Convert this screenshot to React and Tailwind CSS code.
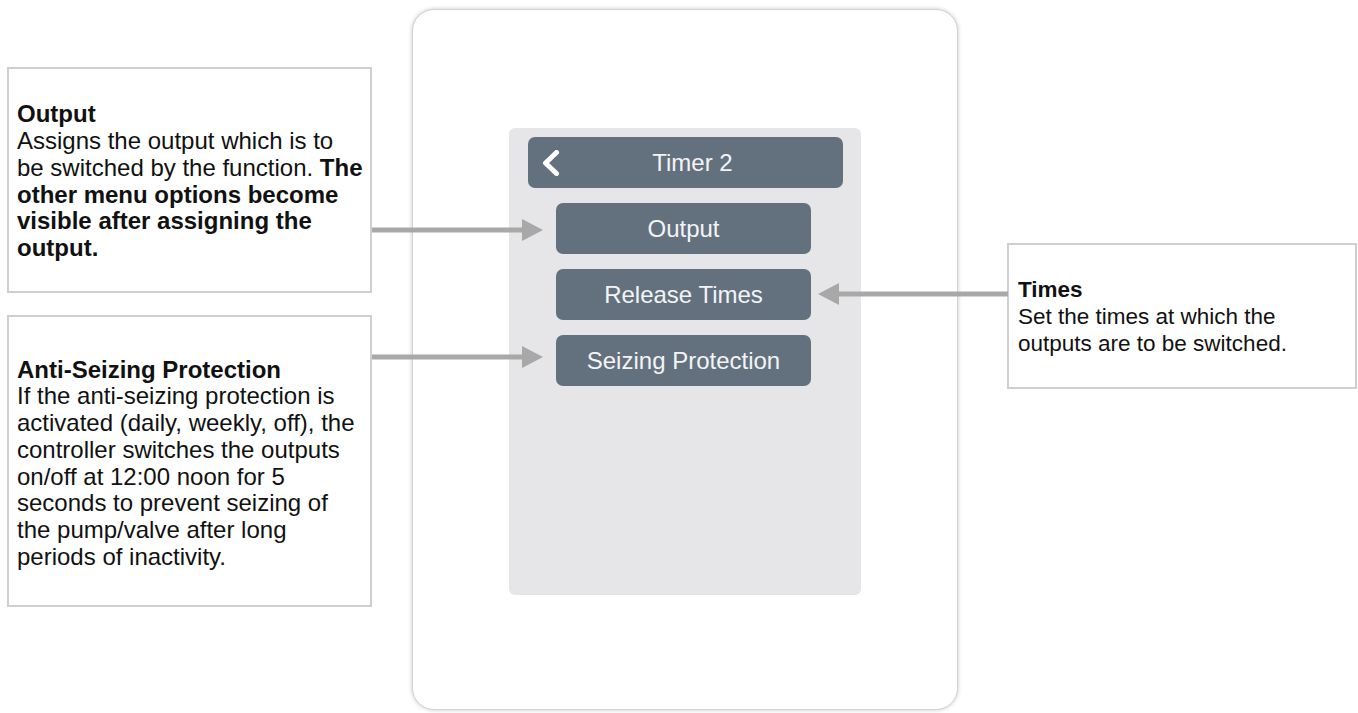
import React from "react";

function Line({ children, bold }) {
  return (
    <div className={"whitespace-nowrap " + (bold ? "font-bold" : "")}>{children}</div>
  );
}

function MenuButton({ children }) {
  return (
    <div className="ml-[47px] flex h-[51px] w-[255px] items-center justify-center rounded-[7px] bg-[#63717f] text-[24px] text-[#f3f4f5]">
      {children}
    </div>
  );
}

export default function App() {
  return (
    <div className="relative flex h-[713px] w-[1358px] overflow-hidden bg-white font-['Liberation_Sans',Arial,sans-serif] text-[#111111]">
      {/* Left column of descriptions */}
      <div className="ml-[7px] mt-[67px] flex w-[365px] flex-col gap-[22px]">
        <div className="flex h-[226px] items-center border-2 border-[#cfcfcf] pl-[8px] pt-[3px] text-[24px] leading-[26.7px]">
          <div>
            <Line bold>Output</Line>
            <Line>Assigns the output which is to</Line>
            <Line>
              be switched by the function. <span className="font-bold">The</span>
            </Line>
            <Line bold>other menu options become</Line>
            <Line bold>visible after assigning the</Line>
            <Line bold>output.</Line>
          </div>
        </div>
        <div className="flex h-[292px] items-center border-2 border-[#cfcfcf] pl-[8px] pt-[5px] text-[24px] leading-[26.7px]">
          <div>
            <Line bold>Anti-Seizing Protection</Line>
            <Line>If the anti-seizing protection is</Line>
            <Line>activated (daily, weekly, off), the</Line>
            <Line>controller switches the outputs</Line>
            <Line>on/off at 12:00 noon for 5</Line>
            <Line>seconds to prevent seizing of</Line>
            <Line>the pump/valve after long</Line>
            <Line>periods of inactivity.</Line>
          </div>
        </div>
      </div>

      {/* Device */}
      <div className="ml-[40px] mt-[9px] flex h-[701px] w-[546px] shrink-0 justify-center rounded-[22px] border border-[#d2d2d2] bg-white shadow-[0_0_4px_rgba(0,0,0,0.22)]">
        <div className="mt-[118px] flex h-[467px] w-[352px] flex-col items-start gap-[15px] rounded-[6px] bg-[#e6e6e8] pt-[9px]">
          <div className="ml-[19px] flex h-[51px] w-[315px] items-center rounded-[7px] bg-[#63717f] pl-[14px] text-[24px] text-[#f3f4f5]">
            <svg width="20" height="26" viewBox="0 0 20 26" className="ml-[0px] mr-[-20px] shrink-0">
              <polyline
                points="14.5,2.5 3.5,13 14.5,23.5"
                fill="none"
                stroke="#ffffff"
                strokeWidth="5"
                strokeLinecap="round"
                strokeLinejoin="round"
              />
            </svg>
            <div className="flex-1 text-center">Timer 2</div>
          </div>
          <MenuButton>Output</MenuButton>
          <MenuButton>Release Times</MenuButton>
          <MenuButton>Seizing Protection</MenuButton>
        </div>
      </div>

      {/* Right description */}
      <div className="ml-[49px] mt-[243px] flex h-[146px] w-[350px] shrink-0 items-center border-2 border-[#cfcfcf] pl-[9px] pt-[3px] text-[22.5px] leading-[26.7px]">
        <div>
          <Line bold>Times</Line>
          <Line>Set the times at which the</Line>
          <Line>outputs are to be switched.</Line>
        </div>
      </div>

      {/* Connector arrows */}
      <svg
        className="pointer-events-none absolute left-0 top-0"
        width="1358"
        height="713"
        viewBox="0 0 1358 713"
      >
        <line x1="372" y1="230" x2="526" y2="230" stroke="#a8a8a8" strokeWidth="5" />
        <polygon points="522,219 543,230 522,241" fill="#a8a8a8" />
        <line x1="372" y1="357" x2="526" y2="357" stroke="#a8a8a8" strokeWidth="5" />
        <polygon points="522,346 543,357 522,368" fill="#a8a8a8" />
        <line x1="835" y1="294" x2="1008" y2="294" stroke="#a8a8a8" strokeWidth="5" />
        <polygon points="839,283 818,294 839,305" fill="#a8a8a8" />
      </svg>
    </div>
  );
}
